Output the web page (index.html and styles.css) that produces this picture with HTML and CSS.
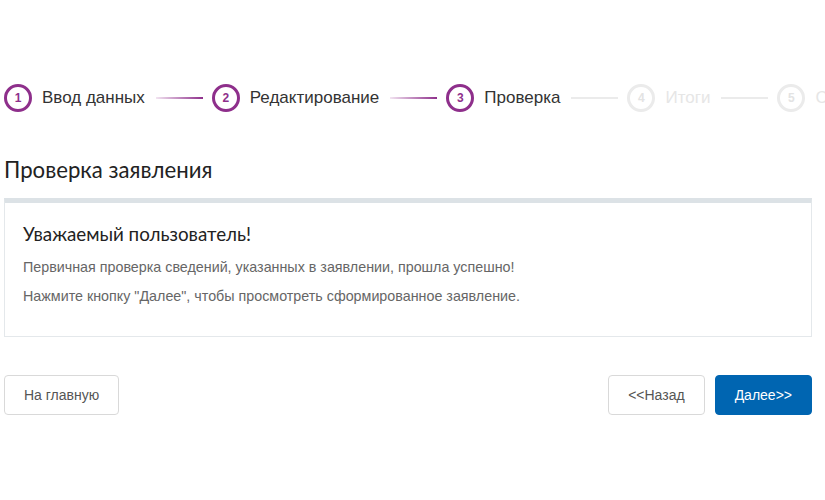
FILE: index.html
```html
<!DOCTYPE html>
<html lang="ru">
<head>
    <meta charset="UTF-8">
    <meta name="viewport" content="width=device-width, initial-scale=1.0">
    <title>Проверка заявления</title>
    <link rel="stylesheet" href="styles.css">
</head>
<body>
    <div class="page">
        <div class="steps">
            <div class="step done"><span class="num">1</span><span class="label">Ввод данных</span></div>
            <div class="line done"></div>
            <div class="step done"><span class="num">2</span><span class="label">Редактирование</span></div>
            <div class="line done"></div>
            <div class="step current"><span class="num">3</span><span class="label">Проверка</span></div>
            <div class="line"></div>
            <div class="step"><span class="num">4</span><span class="label">Итоги</span></div>
            <div class="line"></div>
            <div class="step"><span class="num">5</span><span class="label">Сохранение</span></div>
        </div>

        <h1 class="title">Проверка заявления</h1>

        <div class="card">
            <h2>Уважаемый пользователь!</h2>
            <p>Первичная проверка сведений, указанных в заявлении, прошла успешно!</p>
            <p>Нажмите кнопку "Далее", чтобы просмотреть сформированное заявление.</p>
        </div>

        <div class="actions">
            <button type="button" class="btn">На главную</button>
            <div class="right">
                <button type="button" class="btn">&lt;&lt;Назад</button>
                <button type="button" class="btn primary">Далее&gt;&gt;</button>
            </div>
        </div>
    </div>
</body>
</html>
```

FILE: styles.css
```css
body {
    margin: 0;
    background-color: #ffffff;
    font-family: 'Liberation Sans', Arial, sans-serif;
    color: #333;
}
.page {
    width: 808px;
    padding: 84px 0 0 4px;
}
.steps {
    display: flex;
    align-items: center;
    width: 821px;
    overflow: hidden;
    white-space: nowrap;
    height: 28px;
}
.step {
    display: flex;
    align-items: center;
    flex-shrink: 0;
}
.step .num {
    width: 22px;
    height: 22px;
    border: 3px solid #ebebeb;
    border-radius: 50%;
    display: flex;
    align-items: center;
    justify-content: center;
    font-size: 12px;
    font-weight: bold;
    color: #e3e3e3;
}
.step .label {
    margin-left: 10px;
    font-size: 17px;
    color: #e6e6e6;
}
.step.done .num,
.step.current .num {
    border-color: #8e2f8b;
    color: #8e2f8b;
}
.step.done .label,
.step.current .label {
    color: #333;
}
.line {
    flex-shrink: 0;
    width: 47px;
    height: 2px;
    margin: 0 9px 0 11px;
    background-color: #ebebeb;
}
.line.done {
    background: linear-gradient(to right, #f2e4f1, #8e2f8b);
}
.title {
    margin: 44px 0 0 0;
    font-family: Lato, sans-serif;
    font-weight: normal;
    font-size: 22.2px;
    color: #222;
    line-height: 28px;
}
.card {
    margin-top: 14px;
    border: 1px solid #e4e8eb;
    border-top: 5px solid #dce2e6;
    padding: 19px 18px 32px 18px;
}
.card h2 {
    margin: 0 0 13px 0;
    font-family: Lato, sans-serif;
    font-weight: normal;
    font-size: 18.8px;
    color: #222;
    line-height: 24px;
}
.card p {
    margin: 0 0 13px 0;
    font-size: 14.3px;
    color: #666;
    line-height: 16px;
}
.card p:last-child {
    margin-bottom: 0;
}
.actions {
    display: flex;
    justify-content: space-between;
    margin-top: 38px;
}
.right {
    display: flex;
    gap: 10px;
}
.btn {
    height: 40px;
    padding: 0 19px;
    background-color: #fff;
    border: 1px solid #d9d9d9;
    border-radius: 4px;
    font-family: 'Liberation Sans', Arial, sans-serif;
    font-size: 14px;
    color: #555;
    cursor: pointer;
}
.btn.primary {
    background-color: #0065b1;
    border-color: #0065b1;
    color: #fff;
}
```
